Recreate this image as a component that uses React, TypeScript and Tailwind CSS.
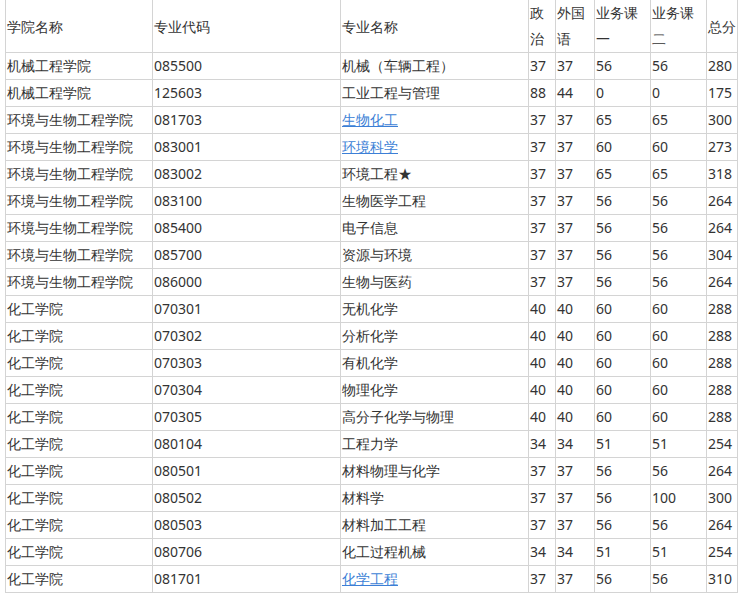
const rows: [string, string, string, string, string, string, string, string, boolean?][] = [
  ["机械工程学院", "085500", "机械（车辆工程）", "37", "37", "56", "56", "280"],
  ["机械工程学院", "125603", "工业工程与管理", "88", "44", "0", "0", "175"],
  ["环境与生物工程学院", "081703", "生物化工", "37", "37", "65", "65", "300", true],
  ["环境与生物工程学院", "083001", "环境科学", "37", "37", "60", "60", "273", true],
  ["环境与生物工程学院", "083002", "环境工程★", "37", "37", "65", "65", "318"],
  ["环境与生物工程学院", "083100", "生物医学工程", "37", "37", "56", "56", "264"],
  ["环境与生物工程学院", "085400", "电子信息", "37", "37", "56", "56", "264"],
  ["环境与生物工程学院", "085700", "资源与环境", "37", "37", "56", "56", "304"],
  ["环境与生物工程学院", "086000", "生物与医药", "37", "37", "56", "56", "264"],
  ["化工学院", "070301", "无机化学", "40", "40", "60", "60", "288"],
  ["化工学院", "070302", "分析化学", "40", "40", "60", "60", "288"],
  ["化工学院", "070303", "有机化学", "40", "40", "60", "60", "288"],
  ["化工学院", "070304", "物理化学", "40", "40", "60", "60", "288"],
  ["化工学院", "070305", "高分子化学与物理", "40", "40", "60", "60", "288"],
  ["化工学院", "080104", "工程力学", "34", "34", "51", "51", "254"],
  ["化工学院", "080501", "材料物理与化学", "37", "37", "56", "56", "264"],
  ["化工学院", "080502", "材料学", "37", "37", "56", "100", "300"],
  ["化工学院", "080503", "材料加工工程", "37", "37", "56", "56", "264"],
  ["化工学院", "080706", "化工过程机械", "34", "34", "51", "51", "254"],
  ["化工学院", "081701", "化学工程", "37", "37", "56", "56", "310", true],
];

const widths = ["w-[147px]", "w-[188px]", "w-[188px]", "w-[27px]", "w-[39px]", "w-[56px]", "w-[56px]", "w-[31px]"];

export default function App() {
  const base = "border border-[#d4d4d4] px-[1px] text-left align-middle overflow-hidden font-normal";
  const cell = base + " whitespace-nowrap";
  const two = base + " leading-[26px]";
  return (
    <div className="bg-white w-[739px] h-[596px] overflow-hidden pl-[5px] text-[14px] text-[#333] font-['Microsoft_YaHei','Noto_Sans_CJK_SC',sans-serif]">
      <table className="border-collapse table-fixed w-[732px] -mt-[1px]">
        <colgroup>
          {widths.map((w, i) => (
            <col key={i} className={w} />
          ))}
        </colgroup>
        <thead>
          <tr className="h-[53px]">
            <th className={cell}>学院名称</th>
            <th className={cell}>专业代码</th>
            <th className={cell}>专业名称</th>
            <th className={two}>政<br />治</th>
            <th className={two}>外国<br />语</th>
            <th className={two}>业务课<br />一</th>
            <th className={two}>业务课<br />二</th>
            <th className={cell}>总分</th>
          </tr>
        </thead>
        <tbody>
          {rows.map((r, i) => (
            <tr key={i} className="h-[27px] leading-[20px]">
              <td className={cell}>{r[0]}</td>
              <td className={cell}>{r[1]}</td>
              <td className={cell}>
                {r[8] ? <span className="text-[#3c7fd6] underline">{r[2]}</span> : r[2]}
              </td>
              <td className={cell}>{r[3]}</td>
              <td className={cell}>{r[4]}</td>
              <td className={cell}>{r[5]}</td>
              <td className={cell}>{r[6]}</td>
              <td className={cell}>{r[7]}</td>
            </tr>
          ))}
        </tbody>
      </table>
    </div>
  );
}
